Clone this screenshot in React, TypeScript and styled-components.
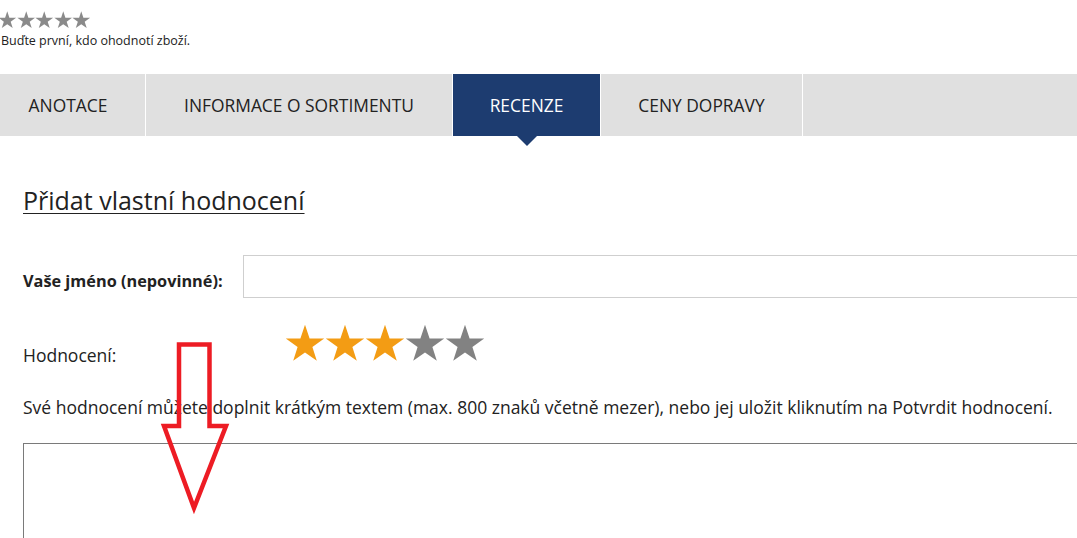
import React from "react";
import styled, { createGlobalStyle } from "styled-components";

const Global = createGlobalStyle`
  html, body { margin: 0; padding: 0; background: #fff; overflow: hidden; }
  body { font-family: "Open Sans", "DejaVu Sans", sans-serif; color: #222; }
  * { box-sizing: border-box; }
`;

const Page = styled.div`
  position: relative;
  width: 1077px;
  height: 538px;
  overflow: hidden;
`;

const TopRating = styled.div`
  padding: 11px 0 0 0;
  margin-left: -2px;
  display: flex;
  flex-direction: column;
`;

const SmallStars = styled.div`
  display: flex;
  height: 19px;
`;

const FirstNote = styled.div`
  margin-left: 3px;
  font-size: 12.5px;
  line-height: 16px;
  margin-top: 3px;
  color: #222;
`;

const Tabs = styled.nav`
  display: flex;
  margin-top: 25px;
  height: 62px;
  margin-left: -9px;
  width: 1100px;
`;

const Tab = styled.div<{ $active?: boolean; $w?: number; $fill?: boolean }>`
  position: relative;
  display: flex;
  align-items: center;
  justify-content: center;
  width: ${(p) => (p.$w ? `${p.$w}px` : "auto")};
  flex: ${(p) => (p.$fill ? "1" : "none")};
  background: ${(p) => (p.$active ? "#1d3c70" : "#e0e0e0")};
  color: ${(p) => (p.$active ? "#fff" : "#222")};
  font-size: 17.4px;
  margin-right: 1px;
  text-transform: uppercase;
  white-space: nowrap;
  &::after {
    content: "";
    display: ${(p) => (p.$active ? "block" : "none")};
    position: absolute;
    left: 50%;
    bottom: -10px;
    margin-left: -10px;
    border-left: 10px solid transparent;
    border-right: 10px solid transparent;
    border-top: 10px solid #1d3c70;
  }
`;

const Content = styled.div`
  padding-left: 23px;
  width: 1120px;
`;

const Heading = styled.h2`
  margin: 49px 0 0 0;
  font-size: 25px;
  font-weight: 400;
  line-height: 30px;
  text-decoration: underline;
  text-underline-offset: 3px;
  text-decoration-thickness: 1px;
  color: #222;
`;

const NameRow = styled.div`
  display: flex;
  align-items: center;
  margin-top: 40px;
`;

const Label = styled.label<{ $bold?: boolean }>`
  width: 220px;
  font-size: 16.3px;
  font-weight: ${(p) => (p.$bold ? 700 : 400)};
  padding-top: ${(p) => (p.$bold ? "9px" : "0")};
  color: #222;
`;

const TextInput = styled.input`
  flex: 1;
  height: 43px;
  border: 1px solid #cfcfcf;
  background: #fff;
  outline: none;
  font: inherit;
`;

const RatingRow = styled.div`
  display: flex;
  align-items: flex-start;
  margin-top: 26px;
`;

const RatingLabel = styled.div`
  width: 262px;
  font-size: 17.5px;
  padding-top: 19px;
  color: #222;
`;

const BigStars = styled.div`
  display: flex;
`;

const Hint = styled.p`
  margin: 28px 0 0 0;
  font-size: 17.5px;
  line-height: 24px;
  color: #222;
  white-space: nowrap;
`;

const TextArea = styled.textarea`
  display: block;
  margin-top: 24px;
  width: 1100px;
  height: 140px;
  border: 1px solid #7a7a7a;
  resize: none;
  outline: none;
  font: inherit;
`;

const ArrowOverlay = styled.svg`
  position: absolute;
  left: 0;
  top: 0;
  pointer-events: none;
`;

const STAR = "50,2 61.5,36 98,36 68.5,57.5 79.5,92 50,71 20.5,92 31.5,57.5 2,36 38.5,36";

function Star({ size, color }: { size: number; color: string }) {
  return (
    <svg width={size} height={size} viewBox="0 0 100 100">
      <polygon points={STAR} fill={color} />
    </svg>
  );
}

export default function App() {
  return (
    <>
      <Global />
      <Page>
        <TopRating>
          <SmallStars>
            {[0, 1, 2, 3, 4].map((i) => (
              <Star key={i} size={18.5} color="#8a8a8a" />
            ))}
          </SmallStars>
          <FirstNote>Buďte první, kdo ohodnotí zboží.</FirstNote>
        </TopRating>

        <Tabs>
          <Tab $w={154}>Anotace</Tab>
          <Tab $w={306}>Informace o sortimentu</Tab>
          <Tab $w={147} $active>
            Recenze
          </Tab>
          <Tab $w={201}>Ceny dopravy</Tab>
          <Tab $fill />
        </Tabs>

        <Content>
          <Heading>Přidat vlastní hodnocení</Heading>
          <NameRow>
            <Label $bold>Vaše jméno (nepovinné):</Label>
            <TextInput type="text" />
          </NameRow>
          <RatingRow>
            <RatingLabel>Hodnocení:</RatingLabel>
            <BigStars>
              {[0, 1, 2, 3, 4].map((i) => (
                <Star key={i} size={40} color={i < 3 ? "#f39c14" : "#828282"} />
              ))}
            </BigStars>
          </RatingRow>
          <Hint>
            Své hodnocení můžete doplnit krátkým textem (max. 800 znaků včetně mezer), nebo jej uložit
            kliknutím na Potvrdit hodnocení.
          </Hint>
          <TextArea />
        </Content>

        <ArrowOverlay width={1077} height={538} viewBox="0 0 1077 538">
          <polygon
            points="179,344.5 209.5,344.5 209.5,426 226,426 194,508 164,426 179,426"
            fill="none"
            stroke="#ed1c24"
            strokeWidth={4.5}
            strokeLinejoin="miter"
          />
        </ArrowOverlay>
      </Page>
    </>
  );
}
